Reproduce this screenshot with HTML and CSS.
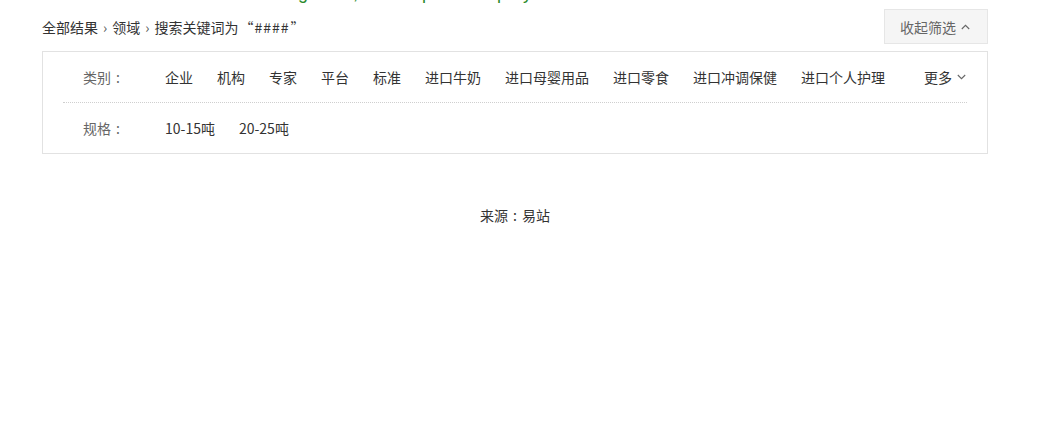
FILE: index.html
```html
<!DOCTYPE html>
<html lang="zh-CN">
<head>
<meta charset="utf-8">
<title>搜索结果</title>
<link rel="stylesheet" href="styles.css">
</head>
<body>
<div class="top-cut">
  <div class="top-text">
    <span class="g1">g</span><span class="g2">,</span><span class="g3">p</span><span class="g4">p</span><span class="g5">y</span><span class="g6">m</span>
  </div>
</div>
<div class="page">
  <div class="header">
    <div class="crumb">全部结果<span class="sep">›</span>领域<span class="sep">›</span>搜索关键词为<span class="q">“</span><span class="hash">####</span><span class="q">”</span></div>
    <div class="toggle">收起筛选
      <svg class="chev" width="9" height="6" viewBox="0 0 9 6"><path d="M0.8 5 L4.5 1.3 L8.2 5" fill="none" stroke="#666" stroke-width="1.1"/></svg>
    </div>
  </div>
  <div class="filter">
    <div class="row row-first">
      <div class="label">类别<span class="colon">:</span></div>
      <div class="opts">
        <span>企业</span><span>机构</span><span>专家</span><span>平台</span><span>标准</span><span>进口牛奶</span><span>进口母婴用品</span><span>进口零食</span><span>进口冲调保健</span><span>进口个人护理</span>
      </div>
      <div class="more">更多
        <svg class="chev" width="9" height="6" viewBox="0 0 9 6"><path d="M0.8 1 L4.5 4.7 L8.2 1" fill="none" stroke="#666" stroke-width="1.1"/></svg>
      </div>
    </div>
    <div class="row">
      <div class="label">规格<span class="colon">:</span></div>
      <div class="opts">
        <span>10-15吨</span><span>20-25吨</span>
      </div>
    </div>
  </div>
  <div class="source">来源<span class="colon">:</span>易站</div>
</div>
</body>
</html>
```

FILE: styles.css
```css
html, body {
  margin: 0;
  padding: 0;
  background: #fff;
}
body {
  font-family: "Noto Sans CJK SC", "Noto Sans", sans-serif;
  font-size: 14px;
  color: #333;
}
.colon {
  display: inline-block;
  width: 14px;
  text-align: center;
}
.q {
  margin: 0 1px;
}
.hash {
  letter-spacing: 1px;
}
.top-cut {
  height: 3px;
  overflow: hidden;
}
.top-text {
  display: flex;
  font-family: "Liberation Sans", sans-serif;
  font-size: 18px;
  line-height: 18px;
  height: 18px;
  margin-top: -16px;
  color: #2b8a2b;
}
.top-text span { display: block; }
.g1 { margin-left: 298px; }
.g2 { margin-left: 45px; }
.g3 { margin-left: 64px; }
.g4 { margin-left: 65px; }
.g5 { margin-left: 16px; }
.g6 { margin-left: 135px; color: #888; }

.page {
  width: 946px;
  margin-left: 42px;
}
.header {
  display: flex;
  justify-content: space-between;
  align-items: center;
  margin-top: 6px;
  height: 35px;
}
.crumb {
  line-height: 20px;
}
.sep {
  margin: 0 5px;
  color: #555;
}
.toggle {
  box-sizing: border-box;
  width: 104px;
  height: 35px;
  background: #f5f5f5;
  border: 1px solid #e6e6e6;
  color: #666;
  display: flex;
  align-items: center;
  padding-left: 15px;
  gap: 5px;
}
.chev { display: block; }
.filter {
  margin-top: 7px;
  border: 1px solid #e2e2e2;
  padding: 0 20px;
}
.row {
  display: flex;
  align-items: center;
  height: 50px;
  padding-left: 20px;
}
.row-first {
  border-bottom: 1px dotted #cfcfcf;
}
.label {
  width: 82px;
  color: #666;
  flex: none;
}
.opts {
  display: flex;
  gap: 24px;
  flex: 1;
}
.more {
  display: flex;
  align-items: center;
  gap: 5px;
  margin-left: auto;
  margin-right: 1px;
}
.source {
  text-align: center;
  margin-top: 51px;
  line-height: 20px;
}
```
